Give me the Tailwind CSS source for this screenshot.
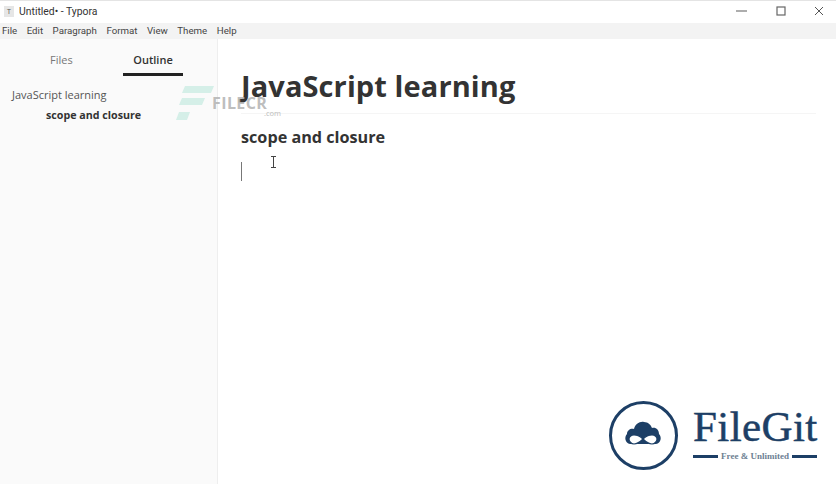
<!DOCTYPE html>
<html lang="en">

<head>
  <meta charset="UTF-8">
  <meta name="viewport" content="width=device-width, initial-scale=1.0">
  <title>Untitled - Typora</title>
  <script src="https://cdn.jsdelivr.net/npm/@tailwindcss/browser@4"></script>
</head>

<body class="bg-white font-['Open_Sans',sans-serif] overflow-hidden">
  <div class="relative w-[836px] h-[484px] flex flex-col overflow-hidden">

    <!-- Title bar -->
    <div class="h-[23px] flex items-center justify-between bg-white border-t border-[#e4e4e4]">
      <div class="flex items-center pl-[4px] gap-[5px]">
        <span class="w-[10px] h-[11px] bg-[#e6e6e6] text-[7px] leading-[11px] text-center text-[#555]">T</span>
        <span class="text-[10.4px] text-[#333] font-['Roboto',sans-serif]">Untitled• - Typora</span>
      </div>
      <div class="flex items-center h-full pb-[3px]">
        <svg class="w-[14px] h-[14px] mr-[25px]" viewBox="0 0 14 14" fill="none" stroke="#777" stroke-width="1.2"><path d="M1 7h11" /></svg>
        <svg class="w-[14px] h-[14px] mr-[24px]" viewBox="0 0 14 14" fill="none" stroke="#666" stroke-width="1.2"><rect x="3" y="3" width="8" height="8" /></svg>
        <svg class="w-[14px] h-[14px] mr-[10px]" viewBox="0 0 14 14" fill="none" stroke="#555" stroke-width="1"><path d="M3 3l8 8M11 3l-8 8" /></svg>
      </div>
    </div>

    <!-- Menu bar -->
    <div class="h-[16px] bg-[#f3f3f3] flex items-center pl-[2px] gap-[9.5px] text-[9.7px] text-[#444] font-['Roboto',sans-serif]">
      <span>File</span>
      <span>Edit</span>
      <span>Paragraph</span>
      <span>Format</span>
      <span>View</span>
      <span>Theme</span>
      <span>Help</span>
    </div>

    <div class="flex flex-1 min-h-0">
      <!-- Sidebar -->
      <div class="w-[218px] bg-[#fafafa] border-r border-[#eeeeee]">
        <div class="flex h-[37px]">
          <div class="w-[123px] pl-[50px] pt-[13px] text-[11px] leading-[15px] text-[#777]">Files</div>
          <div class="w-[60px] border-b-[3px] border-[#222] text-center pt-[13px] text-[11px] leading-[15px] font-semibold text-[#333]">Outline</div>
        </div>
        <div class="pt-[10px] text-[11px] text-[#555]">
          <div class="pl-[12px] h-[20px] leading-[17px]">JavaScript learning</div>
          <div class="pl-[46px] h-[19px] leading-[19px] text-[10.7px] font-bold text-[#333]">scope and closure</div>
        </div>
      </div>

      <!-- Editor -->
      <div class="flex-1 pl-[23px] pr-[20px] pt-[27px]">
        <h1 class="h-[48px] border-b border-[#f5f5f5] text-[29px] leading-[40px] font-bold text-[#333] tracking-[0.1px]">JavaScript learning</h1>
        <h2 class="mt-[11px] text-[16.2px] leading-[24px] font-bold text-[#333]">scope and closure</h2>
        <div class="mt-[13px] w-px h-[19px] bg-[#777]"></div>
      </div>
    </div>

    <!-- Mouse cursor -->
    <svg class="absolute left-[270px] top-[156px] w-[7px] h-[12px]" viewBox="0 0 7 12" fill="none" stroke="#444" stroke-width="1"><path d="M1 .5h5M3.5 .5v11M1 11.5h5" /></svg>

    <!-- FILECR watermark -->
    <div class="absolute left-[176px] top-[86px] w-[105px] h-[34px]">
      <svg class="absolute left-0 top-0 w-[40px] h-[34px]" viewBox="0 0 40 34" fill="#d5efe8"><path d="M9 0h29l-3 7H6zM6 12h23l-3 7H3zM3 26h11l-3 8H0z" /></svg>
      <span class="absolute left-[36px] top-[7px] text-[16px] leading-[20px] font-bold text-[#b5b5b5]/90 tracking-[0.4px]">FILECR</span>
      <span class="absolute left-[88px] top-[22px] text-[7.5px] leading-[10px] text-[#bbb]">.com</span>
    </div>

    <!-- FileGit logo -->
    <div class="absolute left-[609px] top-[401px] w-[212px] h-[70px]">
      <div class="absolute left-0 top-0 w-[69px] h-[69px] rounded-full border-[3px] border-[#1d3f66]"></div>
      <svg class="absolute left-[15px] top-[19px] w-[38px] h-[28px]" viewBox="0 0 38 28">
        <path d="M6 24C1 23 0 17 3 14c0-4 4-6 7-5 1-5 6-8 10-7 4 0 7 3 8 6 4-1 7 2 7 6 3 3 2 9-3 10z" fill="#1d3f66" />
        <path d="M19 19c-3-3-6-4-9-4-3 0-5 2-5 4s2 5 5 5c3 0 6-2 9-5zm0 0c3-3 6-4 9-4 3 0 5 2 5 4s-2 5-5 5c-3 0-6-2-9-5z" fill="#fff" stroke="#1d3f66" stroke-width="1.2" />
      </svg>
      <div class="absolute left-[84px] top-[1px] font-['Liberation_Serif',serif] text-[43px] leading-[50px] tracking-[0.4px] text-[#1d3f66] [-webkit-text-stroke:0.5px_#1d3f66]">FileGit</div>
      <div class="absolute left-[84px] top-[49px] w-[124px] flex items-center gap-[3px]">
        <span class="flex-1 h-[3px] bg-[#1d3f66]"></span>
        <span class="font-['Liberation_Serif',serif] text-[9px] leading-[12px] font-bold text-[#6d7f93]">Free &amp; Unlimited</span>
        <span class="flex-1 h-[3px] bg-[#1d3f66]"></span>
      </div>
    </div>
  </div>
</body>

</html>
